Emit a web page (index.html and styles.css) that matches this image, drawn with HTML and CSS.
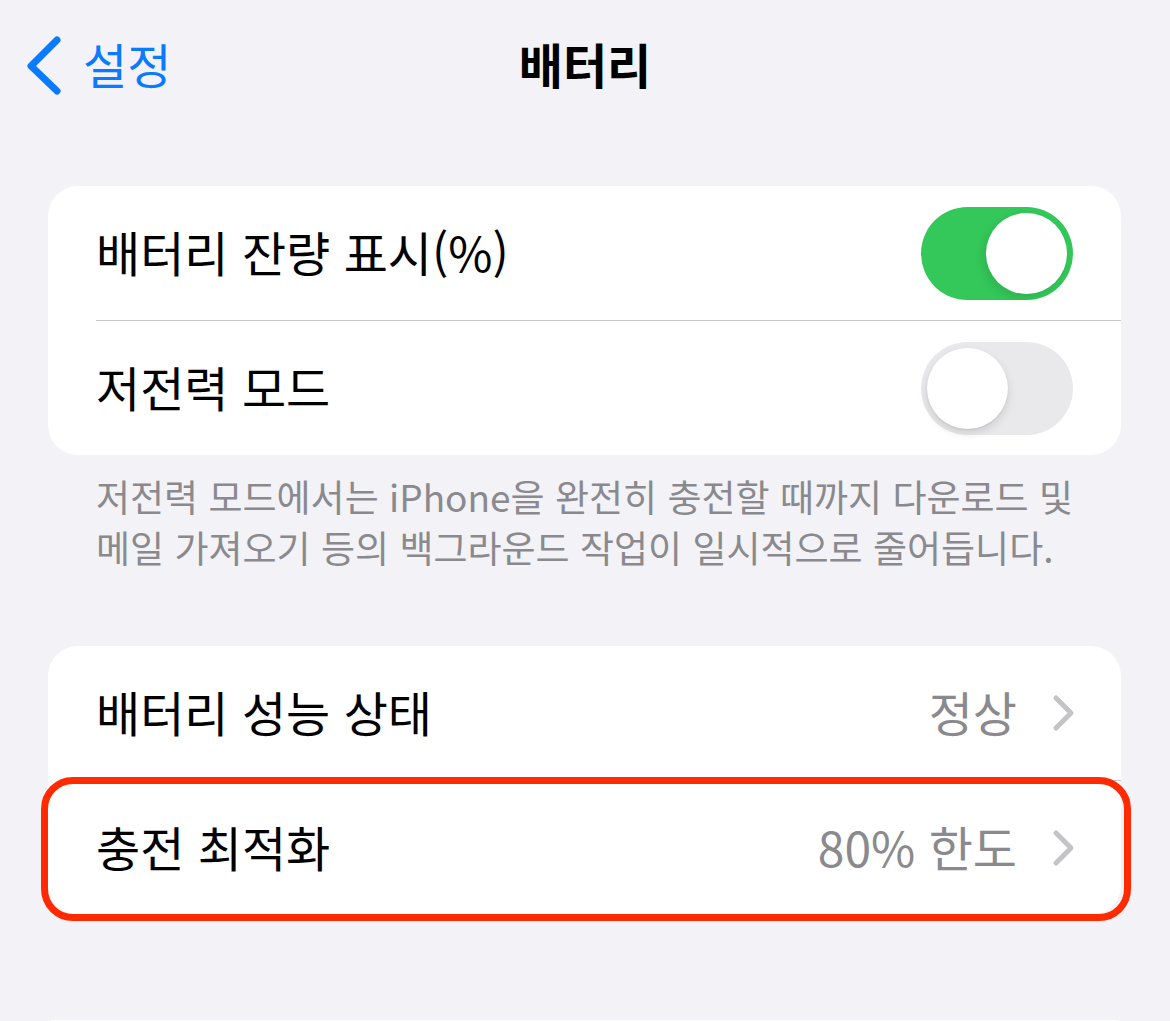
FILE: index.html
```html
<!DOCTYPE html>
<html lang="ko">
<head>
  <meta charset="UTF-8" />
  <meta name="viewport" content="width=device-width, initial-scale=1.0"/>
  <title>배터리</title>
  <link rel="stylesheet" href="styles.css">
</head>
<body>

<div class="nav">
  <a class="back" href="#">
    <svg width="38" height="60" viewBox="0 0 38 60">
      <polyline points="32,5 6,31 32,56" fill="none" stroke="#0a7aff" stroke-width="7" stroke-linecap="round" stroke-linejoin="round"/>
    </svg>
    <span>설정</span>
  </a>
  <h1 class="title">배터리</h1>
</div>

<div class="group">
  <div class="row">
    <span class="label">배터리 잔량 표시(%)</span>
    <span class="toggle on"><span class="knob"></span></span>
  </div>
  <div class="row">
    <span class="label">저전력 모드</span>
    <span class="toggle"><span class="knob"></span></span>
  </div>
</div>
<p class="footer">저전력 모드에서는 iPhone을 완전히 충전할 때까지 다운로드 및 메일 가져오기 등의 백그라운드 작업이 일시적으로 줄어듭니다.</p>

<div class="group second">
  <div class="row">
    <span class="label">배터리 성능 상태</span>
    <span class="value">정상</span>
    <svg class="chev" width="26" height="38" viewBox="0 0 26 38">
      <polyline points="5,4 20,19 5,34" fill="none" stroke="#c4c4c7" stroke-width="5" stroke-linecap="round" stroke-linejoin="round"/>
    </svg>
  </div>
  <div class="row marked">
    <span class="label">충전 최적화</span>
    <span class="value">80% 한도</span>
    <svg class="chev" width="26" height="38" viewBox="0 0 26 38">
      <polyline points="5,4 20,19 5,34" fill="none" stroke="#c4c4c7" stroke-width="5" stroke-linecap="round" stroke-linejoin="round"/>
    </svg>
  </div>
</div>

<div class="group next"></div>

</body>
</html>
```

FILE: styles.css
```css
body {
  font-family: "Noto Sans CJK KR", "Noto Sans", sans-serif;
  background: #f2f2f7;
  color: #000;
  margin: 0;
  padding: 0;
  overflow: hidden;
}
.nav {
  position: relative;
  height: 130px;
  display: flex;
  align-items: center;
  justify-content: center;
}
.back {
  position: absolute;
  left: 25px;
  top: 35px;
  display: flex;
  align-items: center;
  gap: 20px;
  color: #0a7aff;
  text-decoration: none;
  font-size: 48px;
}
.back span {
  line-height: 60px;
  margin-top: -4px;
}
.title {
  margin: 0;
  font-size: 48px;
  font-weight: 700;
  margin-top: -4px;
}
.group {
  background: #fff;
  border-radius: 30px;
  margin: 56px 49px 0 48px;
}
.row {
  display: flex;
  align-items: center;
  height: 134px;
  margin-left: 48px;
  padding-right: 48px;
  font-size: 48px;
}
.row + .row {
  border-top: 1px solid #c6c6c8;
}
.label {
  flex: 1;
  margin-top: -4px;
}
.toggle {
  position: relative;
  width: 152px;
  height: 93px;
  border-radius: 47px;
  background: #e9e9eb;
}
.toggle.on {
  background: #34c759;
}
.knob {
  position: absolute;
  top: 6px;
  left: 6px;
  width: 81px;
  height: 81px;
  border-radius: 50%;
  background: #fff;
  box-shadow: 0 4px 10px rgba(0, 0, 0, 0.12), 0 1px 2px rgba(0, 0, 0, 0.08);
}
.toggle.on .knob {
  left: 65px;
  box-shadow: -3px 4px 10px rgba(0, 0, 0, 0.10);
}
.footer {
  margin: 16px 80px 0 96px;
  font-size: 37px;
  line-height: 51px;
  color: #8a8a8e;
}
.group.second {
  margin-top: 73px;
}
.value {
  color: #8a8a8e;
  margin-right: 34px;
  margin-top: -4px;
}
.chev {
  margin-right: -4px;
}
.marked {
  position: relative;
}
.marked::after {
  content: "";
  position: absolute;
  top: -4px;
  bottom: -6px;
  left: -55px;
  right: -10px;
  border: 7px solid #ff2a00;
  border-radius: 32px;
}
.group.next {
  margin-top: 105px;
  height: 10px;
}
```
